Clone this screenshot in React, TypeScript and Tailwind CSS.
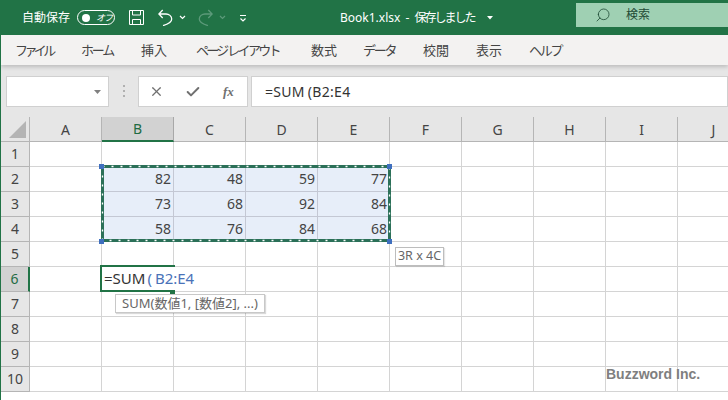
import { Search, X, Check } from "lucide-react";

const font = "font-['Noto_Sans','Noto_Sans_CJK_JP',sans-serif]";
const tabs = [
  { label: "ファイル", w: "w-[66px]", track: "tracking-[-3.6px]" },
  { label: "ホーム", w: "w-[60px]", track: "tracking-[-2.2px]" },
  { label: "挿入", w: "w-[55px]", track: "" },
  { label: "ページ レイアウト", w: "w-[115px]", track: "tracking-[-2.7px]" },
  { label: "数式", w: "w-[52px]", track: "" },
  { label: "データ", w: "w-[60px]", track: "tracking-[-2.2px]" },
  { label: "校閲", w: "w-[53px]", track: "" },
  { label: "表示", w: "w-[53px]", track: "" },
  { label: "ヘルプ", w: "w-[60px]", track: "tracking-[-2.2px]" },
];
const columns = ["A", "B", "C", "D", "E", "F", "G", "H", "I", "J"];
const rows = [1, 2, 3, 4, 5, 6, 7, 8, 9, 10];
const data: Record<number, number[]> = {
  2: [82, 48, 59, 77],
  3: [73, 68, 92, 84],
  4: [58, 76, 84, 68],
};

function TitleBar() {
  return (
    <div className="flex h-[35px] items-center bg-[#217346] text-white">
      <span className="ml-[22px] w-[55px] text-[12px] leading-none whitespace-nowrap">自動保存</span>
      <div className="flex h-[15px] w-[38px] items-center rounded-full border border-white pl-[4px]">
        <span className="h-[8px] w-[8px] rounded-full bg-white" />
        <span className="ml-[6px] text-[9px] leading-none tracking-[-1px] italic">オフ</span>
      </div>
      <svg className="ml-[13px]" width="17" height="17" viewBox="0 0 17 17" fill="none" stroke="white" strokeWidth="1">
        <path d="M1.5 1.5h14v14h-14z" />
        <path d="M4.5 1.5v4.5h8v-4.5M4.5 15.5v-5h8v5" />
      </svg>
      <svg className="ml-[13px]" width="15" height="17" viewBox="0 0 15 17" fill="none" stroke="white" strokeWidth="1.3">
        <path d="M4.7 1L.9 5l3.8 4M.9 5H8c3 0 5.7 2 5.7 5 0 3.5-4.7 5.5-8.7 6.6" />
      </svg>
      <svg className="ml-[6px]" width="7" height="5" viewBox="0 0 7 5" fill="none" stroke="white" strokeWidth="1.2">
        <path d="M1 1l2.5 2.5L6 1" />
      </svg>
      <svg className="ml-[12px]" width="15" height="17" viewBox="0 0 15 17" fill="none" stroke="#5c9a7a" strokeWidth="1.3">
        <path d="M10.3 1l3.8 4-3.8 4M14.1 5H7C4 5 1.3 7 1.3 10c0 3.5 4.7 5.5 8.7 6.6" />
      </svg>
      <svg className="ml-[6px]" width="7" height="5" viewBox="0 0 7 5" fill="none" stroke="#5c9a7a" strokeWidth="1.2">
        <path d="M1 1l2.5 2.5L6 1" />
      </svg>
      <svg className="ml-[14px]" width="6" height="8" viewBox="0 0 6 8" fill="none" stroke="white" strokeWidth="1.2">
        <path d="M0 1.5h6M.5 4.5L3 7l2.5-2.5" />
      </svg>
      <span className="ml-[94px] w-[141px] text-[12px] leading-none whitespace-nowrap">
        Book1.xlsx <span className="mx-[2px]">-</span> <span className="tracking-[-2px]">保存しました</span>
      </span>
      <svg className="ml-[6px]" width="6" height="4" viewBox="0 0 6 4" fill="white">
        <path d="M0 0h6L3 3.5z" />
      </svg>
      <div className="mt-[-5px] ml-[83px] flex h-[24px] flex-1 items-center bg-[#9fd0b3] pl-[19px] text-[#1e4a35]">
        <Search size={16} strokeWidth={1.2} className="-scale-x-100" />
        <span className="ml-[15px] text-[12px] leading-none">検索</span>
      </div>
    </div>
  );
}

function RibbonTabs() {
  return (
    <div className="relative z-10 flex h-[30px] items-center bg-[#f3f2f1] pt-[1px] pl-[14px] text-[13px] text-[#444444] shadow-[0_2px_4px_rgba(0,0,0,0.18)]">
      {tabs.map((t) => (
        <span key={t.label} className={`${t.w} ${t.track} shrink-0 whitespace-nowrap`}>
          {t.label}
        </span>
      ))}
    </div>
  );
}

function FormulaBar() {
  return (
    <div className="flex h-[52px] items-start bg-[#e6e6e6] pt-[11px] pl-[5px]">
      <div className="flex h-[31px] w-[103px] items-center justify-end border border-[#d0d0d0] bg-white pr-[7px]">
        <svg width="7" height="4" viewBox="0 0 7 4" fill="#808080">
          <path d="M0 0h7L3.5 4z" />
        </svg>
      </div>
      <div className="mt-[9px] ml-[14px] flex h-[12px] w-[2px] flex-col justify-between self-start">
        <span className="h-[2px] w-[2px] bg-[#b0b0b0]" />
        <span className="h-[2px] w-[2px] bg-[#b0b0b0]" />
        <span className="h-[2px] w-[2px] bg-[#b0b0b0]" />
      </div>
      <div className="ml-[13px] flex h-[31px] w-[110px] items-center border border-[#d0d0d0] bg-white text-[#707070]">
        <X size={15} strokeWidth={2} className="ml-[10px]" />
        <Check size={16} strokeWidth={3} className="ml-[21px]" />
        <span className="ml-[22px] font-['Liberation_Serif',serif] text-[13px] leading-none font-bold italic">fx</span>
      </div>
      <div className="ml-[3px] flex h-[31px] flex-1 items-center border border-[#d0d0d0] bg-white pl-[13px] text-[14px] tracking-[0.3px] text-[#333333]">
        =SUM<span className="ml-[3px]">(</span>B2:E4
      </div>
    </div>
  );
}

function Sheet() {
  return (
    <div className="relative grid grid-cols-[29px_repeat(10,72px)] grid-rows-[25px_repeat(11,25px)] bg-white text-[14px] text-[#444444]">
      {/* corner + column headers */}
      <div className="flex items-end justify-end border-r border-b border-[#b5b5b5] bg-[#e6e6e6] pr-[3px] pb-[3px]">
        <svg width="17" height="17" viewBox="0 0 17 17" fill="#b4b4b4">
          <path d="M17 0v17H0z" />
        </svg>
      </div>
      {columns.map((c) => (
        <div
          key={c}
          className={
            c === "B"
              ? "flex items-center justify-center border-r border-b-[2px] border-r-[#a8a8a8] border-b-[#217346] bg-[#d2d2d2] text-[#1f6b43]"
              : "flex items-center justify-center border-r border-b border-[#b5b5b5] bg-[#e6e6e6]"
          }
        >
          {c}
        </div>
      ))}

      {rows.map((r) => (
        <Row key={r} row={r} />
      ))}

      {/* marching ants round the referenced range */}
      <svg className="absolute top-[48px] left-[100px]" width="290" height="77" fill="none">
        <rect x="1.5" y="1.5" width="287" height="74" stroke="#2b7058" strokeWidth="3" />
        <rect x="1.5" y="1.5" width="287" height="74" stroke="white" strokeWidth="1.3" strokeDasharray="2 7" />
      </svg>
      {[
        "top-[47px] left-[98px]",
        "top-[47px] left-[386px]",
        "top-[122px] left-[98px]",
        "top-[122px] left-[386px]",
      ].map((pos) => (
        <span key={pos} className={`absolute h-[5px] w-[5px] bg-[#3f6fbf] ${pos}`} />
      ))}

      {/* editing cell */}
      <div className="absolute top-[148px] left-[99px] flex h-[27px] w-[75px] items-center border-y-2 border-l-2 border-[#217346] bg-white pb-[1px] pl-[2px] text-[15px] whitespace-nowrap text-[#333333]">
        =SUM<span className="ml-[2px] mr-[3px] text-[#4a72b8]">(</span>
        <span className="text-[#4a72b8]">B2:E4</span>
      </div>
      <span className="absolute top-[174px] left-[169px] h-[4px] w-[5px] bg-[#217346]" />

      {/* tooltips */}
      <div className="absolute top-[130px] left-[394px] flex h-[19px] w-[49px] items-center justify-center border border-[#bdbdbd] bg-white text-[12.5px] text-[#666666] shadow-[1px_1px_1px_rgba(0,0,0,0.1)]">
        3R x 4C
      </div>
      <div className="absolute top-[177px] left-[114px] flex h-[19px] w-[150px] items-center justify-center border border-[#c8c8c8] bg-white text-[13px] whitespace-nowrap text-[#666666] shadow-[1px_1px_1px_rgba(0,0,0,0.15)]">
        SUM(数値1, [数値2], ...)
      </div>

      {/* watermark */}
      <span className="absolute top-[247px] left-[605px] font-['Liberation_Sans',sans-serif] text-[14px] font-bold whitespace-nowrap text-[#7f7f7f]">
        Buzzword Inc.
      </span>
    </div>
  );
}

function Row({ row }: { row: number }) {
  const values = data[row];
  return (
    <>
      <div
        className={
          row === 6
            ? "flex items-center justify-center border-r-[2px] border-b border-r-[#217346] border-b-[#b5b5b5] bg-[#d2d2d2] pb-[2px] text-[#1f6b43]"
            : "flex items-center justify-center border-r border-b border-[#b5b5b5] bg-[#e6e6e6] pb-[2px]"
        }
      >
        {row}
      </div>
      {columns.map((c, i) => {
        const v = values && i >= 1 && i <= 4 ? values[i - 1] : undefined;
        return (
          <div
            key={c}
            className={
              v !== undefined
                ? "flex items-center justify-end border-r border-b border-[#c4c8d4] bg-[#e7eef9] pr-[2px] pb-[2px]"
                : "border-r border-b border-[#d4d4d4]"
            }
          >
            {v}
          </div>
        );
      })}
    </>
  );
}

export default function App() {
  return (
    <div className={`h-[400px] w-[728px] overflow-hidden bg-[#217346] ${font}`}>
      <TitleBar />
      <div className="ml-[1px] h-[365px] overflow-hidden">
        <RibbonTabs />
        <FormulaBar />
        <Sheet />
      </div>
    </div>
  );
}
